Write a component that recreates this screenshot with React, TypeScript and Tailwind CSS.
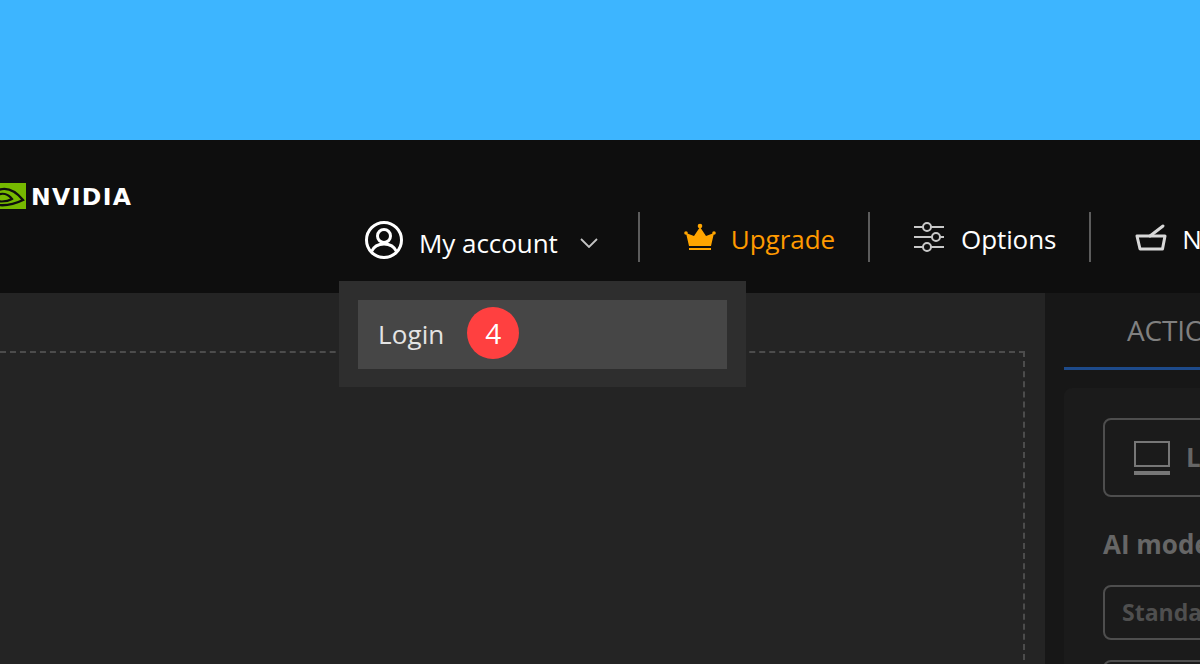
import React from "react";

function Divider() {
  return <div className="w-[2px] h-[50px] bg-[#5c5c5c] shrink-0" />;
}

export default function App() {
  return (
    <div className="w-[1200px] h-[664px] overflow-hidden flex flex-col bg-[#0e0e0e] font-['Open_Sans','Noto_Sans',sans-serif]">
      <div className="h-[140px] shrink-0 bg-[#3db5ff]" />

      <header className="relative h-[153px] shrink-0 bg-[#0e0e0e] flex">
        <div className="w-[364px] shrink-0 pt-[43px] flex items-start overflow-hidden">
          <svg width="26" height="26" viewBox="0 0 26 26" className="shrink-0">
            <rect width="26" height="26" fill="#76b900" />
            <path d="M-6 9 C4 3 14 6 23 17 C15 21 8 23 -2 22" fill="none" stroke="#0e0e0e" strokeWidth="2.4" />
            <path d="M-4 13 C2 9 8 11 12 16 C7 19 2 19 -4 18Z" fill="none" stroke="#0e0e0e" strokeWidth="2.2" />
          </svg>
          <span className="ml-[5px] mt-[1px] text-[23.5px] leading-[26px] font-bold text-white tracking-[1.4px] font-['DejaVu_Sans',sans-serif]">NVIDIA</span>
        </div>

        <div className="flex items-start pt-[75px] h-full">
          <div className="flex items-center h-[66px] -mt-[5px]">
            <svg width="40" height="40" viewBox="0 0 40 40" fill="none" stroke="#fff" strokeWidth="3" className="shrink-0 -mt-[6px]">
              <circle cx="20" cy="20" r="17.5" />
              <circle cx="20" cy="16" r="6.5" />
              <path d="M7.5 31.5 C10 26 14 24 20 24 C26 24 30 26 32.5 31.5" />
            </svg>
            <span className="ml-[15px] text-[26px] text-white whitespace-nowrap tracking-[-0.05px]">My account</span>
            <svg width="18" height="10" viewBox="0 0 18 10" fill="none" stroke="#c4c4c4" strokeWidth="1.8" className="ml-[22px] shrink-0">
              <path d="M1 1 L9 9 L17 1" />
            </svg>
          </div>
        </div>

        <div className="flex items-start pt-[72px] ml-[40px] h-full">
          <div className="flex items-center">
            <Divider />
            <svg width="32" height="28" viewBox="0 0 32 28" className="ml-[44px] shrink-0" fill="#ffa500">
              <circle cx="16" cy="3" r="2.3" />
              <circle cx="2" cy="10" r="1.8" />
              <circle cx="30" cy="10" r="1.8" />
              <path d="M16 4 L22 13 L30 10 L27 23 H5 L2 10 L10 13 Z" />
              <rect x="5" y="25" width="22" height="2" />
            </svg>
            <span className="ml-[15px] text-[26px] leading-[38px] mt-[4px] text-[#ff9a00] tracking-[-0.05px]">Upgrade</span>
            <div className="ml-[33px]"><Divider /></div>
            <svg width="32" height="30" viewBox="0 0 32 30" fill="none" stroke="#c8c8c8" strokeWidth="2" className="ml-[43px] shrink-0">
              <path d="M1 5 H10 M18 5 H31 M1 15 H19 M27 15 H31 M1 25 H10 M18 25 H31" />
              <circle cx="14" cy="5" r="4" />
              <circle cx="23" cy="15" r="4" />
              <circle cx="14" cy="25" r="4" />
            </svg>
            <span className="ml-[16px] text-[26px] leading-[38px] mt-[4px] text-white tracking-[-0.1px]">Options</span>
            <div className="ml-[33px]"><Divider /></div>
            <svg width="32" height="28" viewBox="0 0 32 28" fill="none" stroke="#d8d8d8" strokeWidth="3" className="ml-[44px] shrink-0">
              <path d="M15 13 L28 3" strokeLinecap="round" />
              <path d="M2 13 H30 L27.5 26 H5 Z" strokeLinejoin="round" />
            </svg>
            <span className="ml-[15px] text-[26px] leading-[38px] mt-[4px] text-white">N</span>
          </div>
        </div>

        <div className="absolute left-[339px] top-[141px] w-[407px] h-[106px] bg-[#2e2e2e] p-[19px] z-10">
          <div className="h-[69px] bg-[#464646] flex items-center pl-[20px]">
            <span className="text-[26px] text-[#e4e4e4] tracking-[0.1px]">Login</span>
            <span className="ml-[23px] -mt-[4px] w-[52px] h-[52px] rounded-full bg-[#ff4040] text-white text-[28px] flex items-center justify-center">4</span>
          </div>
        </div>
      </header>

      <main className="flex-1 flex min-h-0">
        <section className="w-[1045px] shrink-0 bg-[#242424] pt-[58px] pr-[20px] overflow-hidden">
          <div className="h-[400px] border-t-2 border-r-2 border-dashed border-[#4c4c4c]" />
        </section>
        <aside className="flex-1 bg-[#171717] pl-[19px] overflow-hidden">
          <div className="h-[77px] w-[300px] border-b-[3px] border-[#1d4a8a] pl-[63px] pt-[16px]">
            <span className="text-[28px] text-[#808080] whitespace-nowrap tracking-[-0.2px]">ACTIONS</span>
          </div>
          <div className="mt-[18px] rounded-tl-[8px] pl-[39px] pt-[30px] w-[300px] h-[400px] bg-[#1b1b1b]">
            <div className="w-[240px] h-[79px] rounded-[8px] border-2 border-[#4e4e4e] flex items-center pl-[29px]">
              <svg width="36" height="34" viewBox="0 0 36 34" fill="none" stroke="#777" strokeWidth="2">
                <rect x="1" y="1" width="34" height="24" />
                <path d="M0 32 H36" strokeWidth="4" />
              </svg>
              <span className="ml-[16px] text-[26px] font-bold text-[#666]">Laptop</span>
            </div>
            <div className="mt-[28px] text-[26px] font-bold text-[#666] whitespace-nowrap">AI model</div>
            <div className="mt-[21px] w-[240px] h-[55px] rounded-[8px] border-2 border-[#4e4e4e] flex items-center pl-[17px]">
              <span className="text-[23px] font-bold text-[#4f4f4f]">Standard</span>
            </div>
            <div className="mt-[20px] w-[240px] h-[55px] rounded-[8px] border-2 border-[#4e4e4e]" />
          </div>
        </aside>
      </main>
    </div>
  );
}
